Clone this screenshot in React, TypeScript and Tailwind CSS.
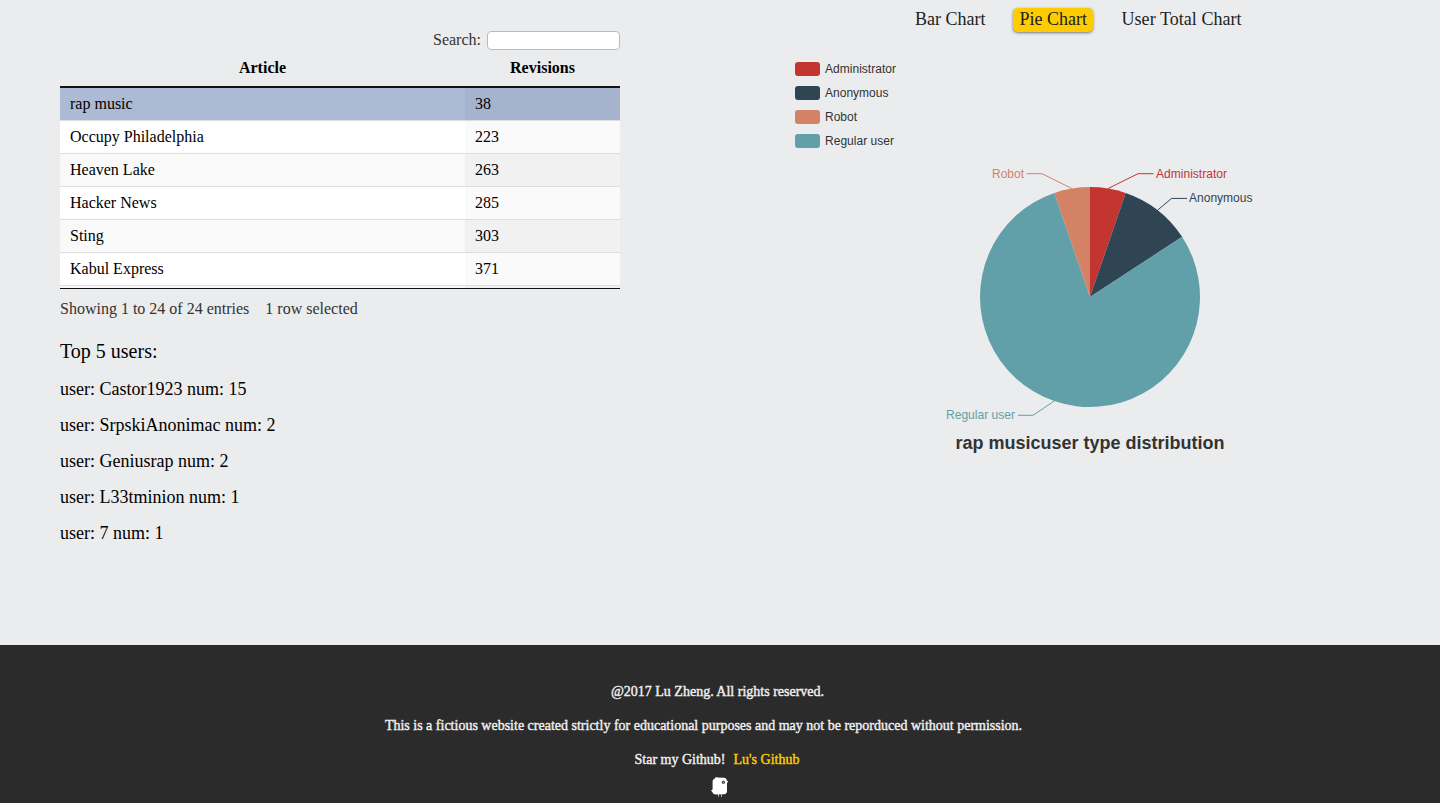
import React from 'react';

const articles = [
  { title: 'rap music', revisions: 38 },
  { title: 'Occupy Philadelphia', revisions: 223 },
  { title: 'Heaven Lake', revisions: 263 },
  { title: 'Hacker News', revisions: 285 },
  { title: 'Sting', revisions: 303 },
  { title: 'Kabul Express', revisions: 371 },
];

const users = [
  { name: 'Castor1923', num: 15 },
  { name: 'SrpskiAnonimac', num: 2 },
  { name: 'Geniusrap', num: 2 },
  { name: 'L33tminion', num: 1 },
  { name: '7', num: 1 },
];

const slices = [
  { name: 'Administrator', count: 2, color: '#c23531', line: '373.1,128.5 403,113.7 418.5,113.7', x: 421, y: 118, w: 71 },
  { name: 'Anonymous', count: 4, color: '#2f4554', line: '422.6,150.2 436.5,138.4 452,138.4', x: 454, y: 142, w: 63.5 },
  { name: 'Regular user', count: 30, color: '#61a0a8', line: '319.3,341 298,355.3 283,355.3', x: 211, y: 359, w: 69 },
  { name: 'Robot', count: 2, color: '#d48265', line: '336.9,128.5 307,113.7 291.5,113.7', x: 257, y: 118, w: 32 },
];

const legend = [
  { name: 'Administrator', color: '#c23531', w: 71 },
  { name: 'Anonymous', color: '#2f4554', w: 63.5 },
  { name: 'Robot', color: '#d48265', w: 32 },
  { name: 'Regular user', color: '#61a0a8', w: 69 },
];

const CX = 355;
const CY = 237;
const R = 110;

function slicePath(start: number, end: number) {
  const point = (a: number) => `${CX + R * Math.sin(a)} ${CY - R * Math.cos(a)}`;
  const large = end - start > Math.PI ? 1 : 0;
  return `M${CX} ${CY}L${point(start)}A${R} ${R} 0 ${large} 1 ${point(end)}Z`;
}

function PieChart() {
  const total = slices.reduce((sum, s) => sum + s.count, 0);
  let angle = 0;
  return (
    <svg width="640" height="420" className="block font-['Liberation_Sans',sans-serif]" fontSize="12">
      {legend.map((item, i) => (
        <g key={item.name}>
          <rect x="60" y={2 + i * 24} width="25" height="14" rx="3" fill={item.color} />
          <text x="90" y={13 + i * 24} fill="#333" textLength={item.w}>{item.name}</text>
        </g>
      ))}
      {slices.map((s) => {
        const start = angle;
        angle += (s.count / total) * Math.PI * 2;
        return (
          <g key={s.name}>
            <path d={slicePath(start, angle)} fill={s.color} />
            <polyline points={s.line} fill="none" stroke={s.color} />
            <text x={s.x} y={s.y} fill={s.color} textLength={s.w}>{s.name}</text>
          </g>
        );
      })}
      <text x={CX} y="389" fontSize="18" fontWeight="700" fill="#333" textAnchor="middle">
        rap musicuser type distribution
      </text>
    </svg>
  );
}

function Bird() {
  return (
    <svg width="20" height="22" viewBox="0 0 20 22" className="block">
      <path d="M8.500 18v3M11.500 18v3" stroke="#aaa" strokeWidth="1" />
      <path d="M4.500 3C4.800 1.500 6 .9 7.500 1.400L14 1.800C15.500 1.900 16.500 2.800 16.800 4.500L18.200 5.600L17 7V15C17 17 16 18.200 14 18.300L6 18.500C4 18.300 3 17.800 2.500 16.200L1 14.400L2.600 13.500V5.500C2.600 4 3.300 3.200 4.500 3Z" fill="#fff" />
      <circle cx="13.400" cy="6.300" r="1.700" fill="#555" />
      <circle cx="13.400" cy="6.300" r=".5" fill="#aaa" />
    </svg>
  );
}

export default function App() {
  return (
    <div className="flex h-[803px] w-[1440px] flex-col overflow-hidden bg-[#ebeced] font-['Liberation_Serif',serif] text-black">
      <main className="flex h-[645px]">
        <section className="w-[720px] pl-[60px] pt-[31px]">
          <div className="w-[560px]">
            <label className="flex h-[19px] items-center justify-end text-base leading-[19px] text-[#333]">
              <span className="pb-0.5">Search:</span>
              <input className="ml-1.5 h-[19px] w-[133px] rounded-[4px] border border-[#bbb] bg-white px-1 outline-none" />
            </label>
            <div className="flex h-[38px] border-b-2 border-[#111] text-center text-base font-bold leading-9">
              <div className="w-[405px]">Article</div>
              <div className="w-[155px]">Revisions</div>
            </div>
            <div className="h-[201px] overflow-hidden border-b border-[#111]">
              {articles.map((a, i) => (
                <div
                  key={a.title}
                  className={
                    i === 0
                      ? 'flex h-8 bg-[#acbad4] leading-8'
                      : i % 2
                        ? 'flex h-[33px] border-t border-[#ddd] bg-white leading-8'
                        : 'flex h-[33px] border-t border-[#ddd] bg-[#f9f9f9] leading-8'
                  }
                >
                  <div className="w-[405px] pl-2.5">{a.title}</div>
                  <div
                    className={
                      i === 0
                        ? 'w-[155px] bg-[#a6b3cd] pl-2.5'
                        : i % 2
                          ? 'w-[155px] bg-[#fafafa] pl-2.5'
                          : 'w-[155px] bg-[#f1f1f1] pl-2.5'
                    }
                  >
                    {a.revisions}
                  </div>
                </div>
              ))}
              <div className="flex h-[33px] border-t border-[#ddd] bg-[#f9f9f9]">
                <div className="w-[405px]" />
                <div className="w-[155px] bg-[#f1f1f1]" />
              </div>
            </div>
            <div className="flex gap-4 pt-2.5 text-base leading-5 text-[#333]">
              <span>Showing 1 to 24 of 24 entries</span>
              <span>1 row selected</span>
            </div>
          </div>
          <h2 className="mt-5 text-[20px] leading-6">Top 5 users:</h2>
          <ul className="mt-2 text-lg leading-9">
            {users.map((u) => (
              <li key={u.name}>
                user: {u.name} num: {u.num}
              </li>
            ))}
          </ul>
        </section>
        <section className="w-[720px] pl-[15px]">
          <nav className="flex h-[60px] items-start pl-[174px] pt-2 text-lg leading-[22px] text-[#222]">
            <span className="px-1.5">Bar Chart</span>
            <span className="ml-[22px] h-6 w-20 whitespace-nowrap rounded-[5px] bg-[#fc0] px-1.5 shadow-[0_1px_3px_rgba(0,0,0,0.5)]">Pie Chart</span>
            <span className="ml-[22px] px-1.5 tracking-[0.05px]">User Total Chart</span>
          </nav>
          <PieChart />
        </section>
      </main>
      <footer className="flex h-[158px] flex-col items-center bg-[#2b2b2b] pt-[39px] text-sm leading-4 text-[#f0f0f0] [-webkit-text-stroke:0.4px]">
        <p className="-ml-[5px]">@2017 Lu Zheng. All rights reserved.</p>
        <p className="-ml-[33px] mt-[18px]">
          This is a fictious website created strictly for educational purposes and may not be reporduced without permission.
        </p>
        <p className="-ml-[6px] mt-[18px] flex gap-2">
          <span>Star my Github!</span>
          <a className="text-[#fc0]">Lu&apos;s Github</a>
        </p>
        <div className="mt-2">
          <Bird />
        </div>
      </footer>
    </div>
  );
}
